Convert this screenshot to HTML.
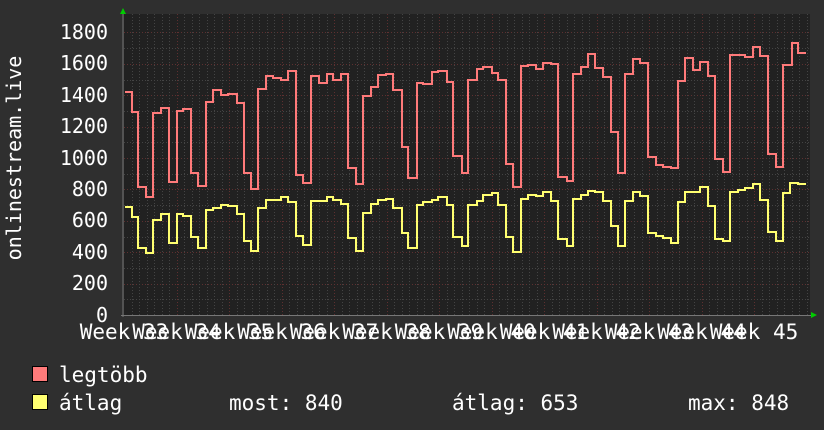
<!DOCTYPE html>
<html><head><meta charset="utf-8"><style>
html,body{margin:0;padding:0;background:#2f2f2f;}
svg{display:block}
text{font-family:"DejaVu Sans Mono","Liberation Mono",monospace;fill:#fff;font-size:20px}
.lg{font-size:21px}
</style></head><body>
<svg width="824" height="430" viewBox="0 0 824 430" xmlns="http://www.w3.org/2000/svg">
<rect width="824" height="430" fill="#2f2f2f"/>
<rect x="124" y="14" width="686" height="301" fill="#212121"/>
<g id="grid"></g>
<line x1="123" y1="12" x2="123" y2="317" stroke="#777" stroke-width="1"/>
<line x1="121" y1="315.5" x2="812" y2="315.5" stroke="#777" stroke-width="1"/>
<polygon points="120,14 126,14 123,8" fill="#0c0"/>
<polygon points="811,312 811,318 817,315" fill="#0c0"/>
<polyline id="red" fill="none" stroke="#ff7a7a" stroke-width="2"/>
<polyline id="yel" fill="none" stroke="#ffff70" stroke-width="2"/>
<g text-anchor="end">
<text x="108" y="39">1800</text><text x="108" y="70">1600</text><text x="108" y="102">1400</text>
<text x="108" y="133">1200</text><text x="108" y="165">1000</text><text x="108" y="196">800</text>
<text x="108" y="227">600</text><text x="108" y="259">400</text><text x="108" y="290">200</text>
<text x="108" y="322">0</text>
</g>
<text transform="translate(21,158) rotate(-90)" text-anchor="middle">onlinestream.live</text>
<g id="xl" text-anchor="middle" class="lg"></g>
<rect x="32.5" y="366.5" width="15" height="15" fill="#ff7a7a" stroke="#000"/>
<rect x="32.5" y="394.5" width="15" height="15" fill="#ffff70" stroke="#000"/>
<g class="lg">
<text x="59" y="382" class="lg">legtöbb</text>
<text x="59" y="410" class="lg">átlag</text>
<text x="229" y="410" class="lg">most: 840</text>
<text x="452" y="410" class="lg">átlag: 653</text>
<text x="688" y="410" class="lg">max: 848</text>
</g>
</svg>
<script>
var ns="http://www.w3.org/2000/svg",g=document.getElementById('grid');
function L(x1,y1,x2,y2,c){var l=document.createElementNS(ns,'line');l.setAttribute('x1',x1);l.setAttribute('y1',y1);l.setAttribute('x2',x2);l.setAttribute('y2',y2);l.setAttribute('stroke',c);l.setAttribute('stroke-dasharray','1,2');g.appendChild(l);}
for(var i=1;i<19;i++){var y=315-i*15.7;L(124,Math.round(y)+.5,810,Math.round(y)+.5,i%2?'#444':'#5e3030');}
for(var x=124+7.5;x<810;x+=7.5){L(Math.round(x)+.5,14,Math.round(x)+.5,315,'#444');}
for(var k=1;k<13;k++){var x=Math.round(124+52.5*k)+.5;L(x,14,x,315,'#5e3030');}
var xl=document.getElementById('xl');
for(var k=0;k<13;k++){var t=document.createElementNS(ns,'text');t.setAttribute('x',124+52.5*k);t.setAttribute('y',339);t.setAttribute('class','lg');t.textContent='Week '+(33+k);xl.appendChild(t);}
function pts(a){var s=[];for(var i=0;i<a.length;i++){var x0=a[i][0],y=a[i][1],x1=i+1<a.length?a[i+1][0]:806;s.push(x0+','+y,x1+','+y);}return s.join(' ');}
var R=[[125,92],[132,112],[138,187],[146,197],[153,113],[161,108],[169,182],[177,111],[183,109],[191,173],[198,186],[206,102],[213,90],[221,95],[228,94],[237,103],[244,173],[251,189],[258,89],[266,76],[273,78],[281,80],[288,71],[296,175],[303,183],[311,76],[319,83],[327,74],[333,80],[341,74],[348,168],[356,184],[363,96],[371,87],[378,75],[386,74],[393,90],[402,147],[408,178],[417,83],[423,84],[432,72],[438,71],[447,82],[453,156],[462,173],[468,80],[477,69],[483,67],[492,73],[498,80],[506,164],[513,187],[521,66],[528,65],[536,69],[543,63],[551,64],[558,177],[567,181],[573,74],[581,67],[588,54],[595,68],[603,77],[611,132],[618,173],[625,74],[633,59],[640,63],[648,157],[656,165],[663,167],[671,168],[678,81],[685,58],[693,70],[700,62],[708,76],[715,159],[723,172],[730,55],[745,57],[753,47],[760,56],[768,154],[776,167],[783,65],[792,43],[798,53]];
var Y=[[125,207],[132,217],[138,248],[146,253],[153,220],[161,214],[169,243],[177,214],[183,216],[191,237],[198,248],[206,210],[213,208],[221,205],[228,206],[237,214],[244,241],[251,251],[258,208],[266,200],[281,197],[288,202],[296,236],[303,245],[311,201],[327,197],[333,200],[341,204],[348,238],[356,251],[363,213],[371,204],[378,200],[386,199],[393,208],[402,233],[408,248],[417,205],[423,202],[432,200],[438,197],[447,205],[453,237],[462,246],[468,205],[477,201],[483,195],[492,193],[498,205],[506,237],[513,252],[521,199],[528,195],[536,196],[543,192],[551,201],[558,239],[567,246],[573,199],[581,195],[588,191],[595,192],[603,201],[611,226],[618,246],[625,201],[633,192],[640,196],[648,233],[656,236],[663,238],[671,243],[678,202],[685,192],[700,187],[708,206],[715,239],[723,241],[730,192],[738,190],[745,188],[753,184],[760,200],[768,232],[776,241],[783,193],[790,183],[798,184]];
document.getElementById('red').setAttribute('points',pts(R));
document.getElementById('yel').setAttribute('points',pts(Y));
</script>
</body></html>
